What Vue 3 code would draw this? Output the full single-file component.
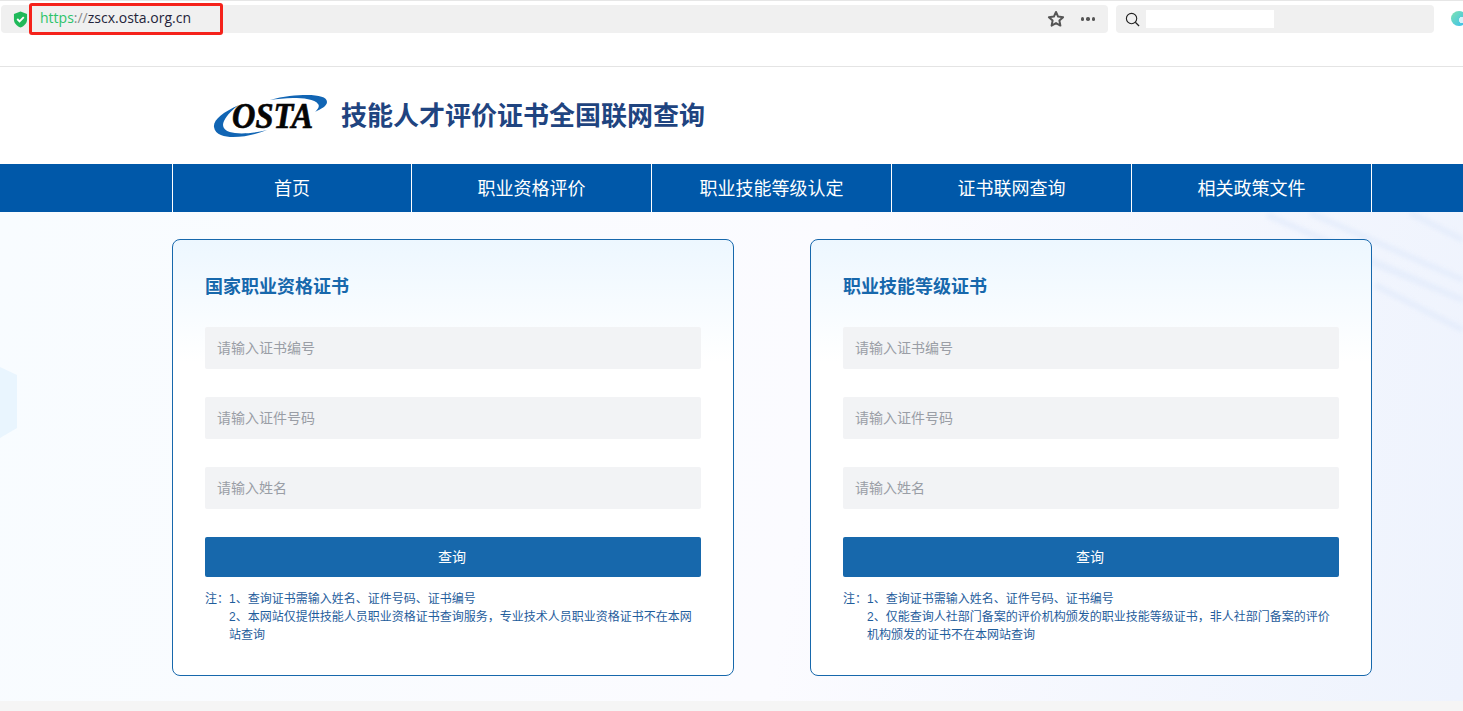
<script setup>
const navItems = ['首页', '职业资格评价', '职业技能等级认定', '证书联网查询', '相关政策文件']

const cards = [
  {
    title: '国家职业资格证书',
    notes: [
      '查询证书需输入姓名、证件号码、证书编号',
      '本网站仅提供技能人员职业资格证书查询服务，专业技术人员职业资格证书不在本网站查询'
    ]
  },
  {
    title: '职业技能等级证书',
    notes: [
      '查询证书需输入姓名、证件号码、证书编号',
      '仅能查询人社部门备案的评价机构颁发的职业技能等级证书，非人社部门备案的评价机构颁发的证书不在本网站查询'
    ]
  }
]

const fields = ['请输入证书编号', '请输入证件号码', '请输入姓名']
</script>

<template>
  <div class="page">
    <div class="browser-bar">
      <div class="address">
        <svg class="shield" viewBox="0 0 16 18">
          <path d="M8 0.500 15 3v6c0 4-3 7-7 8.500C4 16 1 13 1 9V3z" fill="#1fb95a" />
          <path d="M4.500 8.500 7 11l4.500-4.500" fill="none" stroke="#fff" stroke-width="2" />
        </svg>
        <span class="url"><span class="scheme">https</span><span class="slashes">://</span>zscx.osta.org.cn</span>
        <span class="url-mark"></span>
        <span class="address-actions">
          <svg class="star" viewBox="0 0 18 18">
            <path d="M9 2l2.100 4.600 5 .6-3.700 3.400 1 5L9 13.100 4.600 15.600l1-5L1.900 7.200l5-.6z" fill="none" stroke="#555" stroke-width="2" stroke-linejoin="round" />
          </svg>
          <span class="dots"><i></i><i></i><i></i></span>
        </span>
      </div>
      <div class="search">
        <svg class="lens" viewBox="0 0 16 16">
          <circle cx="7" cy="7" r="5.500" fill="none" stroke="#222" stroke-width="1.200" />
          <path d="M11 11l4 4" stroke="#222" stroke-width="1.400" />
        </svg>
        <span class="search-blank"></span>
      </div>
      <span class="camera"></span>
    </div>

    <header class="brand">
      <svg class="logo" viewBox="0 0 116 44">
        <path d="M26 11C10 18 0 26 1 33C2 41 12 43 20 43C32 43 44 40 54 36C42 39 30 40 22 39C12 38 8 33 11 27C14 21 20 15 26 11z" fill="#1165b4" />
        <path d="M57 6C70 2 84 1 94 1C106 1 114 3 114 8C114 12 108 15 102 18C105 15 107 12 105 10C102 5 90 4 80 4C72 4 64 5 57 6z" fill="#1165b4" />
        <text x="19" y="34" class="logo-text" textLength="81" lengthAdjust="spacingAndGlyphs">OSTA</text>
      </svg>
      <h1>技能人才评价证书全国联网查询</h1>
    </header>

    <nav class="nav">
      <div class="nav-inner">
        <a v-for="item in navItems" :key="item" class="nav-item">{{ item }}</a>
      </div>
    </nav>

    <main class="main">
      <svg class="bg-art" viewBox="0 0 1463 489" preserveAspectRatio="none">
        <polygon points="0,155 17,163 17,216 0,226" fill="#e9f5fe" />
        <g class="streaks" stroke="#e2ebfb" stroke-width="6">
          <line x1="1267" y1="3" x2="1463" y2="88" />
          <line x1="1310" y1="1" x2="1463" y2="68" />
          <line x1="1410" y1="1" x2="1463" y2="28" />
          <line x1="1370" y1="50" x2="1463" y2="88" />
          <line x1="1375" y1="73" x2="1463" y2="118" />
        </g>
      </svg>
      <section v-for="card in cards" :key="card.title" class="card">
        <h2>{{ card.title }}</h2>
        <div v-for="field in fields" :key="field" class="field">{{ field }}</div>
        <button class="query" type="button">查询</button>
        <div class="notes">
          <span class="notes-label">注：</span>
          <ol>
            <li v-for="(note, i) in card.notes" :key="i">{{ i + 1 }}、{{ note }}</li>
          </ol>
        </div>
      </section>
    </main>

    <div class="foot"></div>
  </div>
</template>

<style scoped>
.page {
  position: relative;
  width: 1463px;
  height: 711px;
  overflow: hidden;
  background: #fff;
  font-family: "Liberation Sans", "Noto Sans CJK SC", sans-serif;
}

.browser-bar {
  box-sizing: border-box;
  height: 67px;
  display: flex;
  align-items: flex-start;
  padding: 4px 0 0 1px;
  border-top: 1px solid #e6e6e6;
  border-bottom: 1px solid #e4e4e4;
}

.address {
  position: relative;
  flex: none;
  width: 1107px;
  height: 28px;
  display: flex;
  align-items: center;
  background: #f0f0f0;
  border-radius: 4px;
}

.shield {
  width: 15px;
  height: 17px;
  margin-left: 12px;
}

.url {
  margin: 0 0 3px 12px;
  font-family: "Open Sans", "Liberation Sans", sans-serif;
  font-size: 14px;
  color: #24243a;
}

.scheme {
  color: #2cc46a;
}

.slashes {
  color: #8a8a8a;
}

.url-mark {
  position: absolute;
  left: 28px;
  top: -2px;
  width: 188px;
  height: 26px;
  border: 3px solid #f5221b;
  border-radius: 3px;
}

.address-actions {
  margin-left: auto;
  display: flex;
  align-items: center;
  gap: 16px;
  padding-right: 13px;
}

.star {
  width: 18px;
  height: 18px;
}

.dots {
  display: flex;
  gap: 2px;
}

.dots i {
  width: 3.500px;
  height: 3.500px;
  border-radius: 50%;
  background: #555;
}

.search {
  flex: none;
  width: 318px;
  height: 28px;
  margin-left: 8px;
  display: flex;
  align-items: center;
  background: #f0f0f0;
  border-radius: 4px;
}

.lens {
  width: 15px;
  height: 15px;
  margin-left: 9px;
}

.search-blank {
  width: 128px;
  height: 18px;
  margin-left: 6px;
  background: #fff;
}

.camera {
  flex: none;
  width: 16px;
  height: 15px;
  margin-left: 17px;
  margin-top: 6px;
  border-radius: 50%;
  background: radial-gradient(circle at 70% 60%, #d8f3fb 0 3px, transparent 3.500px), linear-gradient(135deg, #7fe3b0, #36bdf2);
}

.brand {
  height: 97px;
  display: flex;
  align-items: center;
  padding-left: 213px;
}

.logo {
  width: 116px;
  height: 44px;
}

.logo-text {
  font-family: "Liberation Serif", serif;
  font-size: 35px;
  font-weight: 700;
  font-style: italic;
  fill: #050505;
  stroke: #050505;
  stroke-width: 0.700px;
}

.brand h1 {
  margin: 0 0 4px 12px;
  font-size: 26px;
  font-weight: 700;
  color: #1f4480;
}

.nav {
  height: 48px;
  background: #0058a9;
}

.nav-inner {
  width: 1199px;
  height: 48px;
  margin-left: 172px;
  display: flex;
}

.nav-item {
  box-sizing: border-box;
  width: 240px;
  flex: none;
  display: flex;
  align-items: center;
  justify-content: center;
  padding-bottom: 2px;
  border-right: 1px solid #fff;
  font-size: 18px;
  color: #fff;
}

.nav-item:first-child {
  border-left: 1px solid #fff;
}

.main {
  position: relative;
  height: 489px;
  box-sizing: border-box;
  display: flex;
  gap: 76px;
  padding: 27px 0 0 172px;
  background: linear-gradient(100deg, #f8fcff 0%, #fbfbff 55%, #eef3fd 100%);
}

.bg-art {
  position: absolute;
  inset: 0;
  width: 100%;
  height: 100%;
}

.streaks {
  filter: blur(2px);
  opacity: 0.7;
}

.card {
  position: relative;
  box-sizing: border-box;
  width: 562px;
  height: 437px;
  padding: 33px 32px 0;
  border: 1px solid #1768ac;
  border-radius: 8px;
  background: linear-gradient(180deg, #edf7ff 0%, #fff 28%);
}

.card h2 {
  margin: 0 0 26px;
  height: 28px;
  line-height: 28px;
  font-size: 18px;
  font-weight: 700;
  color: #1768ac;
}

.field {
  height: 42px;
  line-height: 42px;
  margin-bottom: 28px;
  padding-left: 12px;
  background: #f2f3f5;
  border-radius: 2px;
  font-size: 14px;
  color: #9a9ea6;
}

.query {
  display: block;
  width: 100%;
  height: 40px;
  padding: 0 2px 3px 0;
  border: 0;
  border-radius: 2px;
  background: #1768ac;
  color: #fff;
  font-family: inherit;
  font-size: 14px;
}

.notes {
  display: flex;
  margin-top: 13px;
  font-size: 12px;
  line-height: 18px;
  color: #1f5d9c;
}

.notes-label {
  flex: none;
  width: 24px;
}

.notes ol {
  flex: 1;
  margin: 0;
  padding: 0 8px 0 0;
  list-style: none;
}

.foot {
  height: 10px;
  background: #f5f5f5;
}
</style>

<style>
html,
body {
  margin: 0;
  background: #fff;
}
</style>
